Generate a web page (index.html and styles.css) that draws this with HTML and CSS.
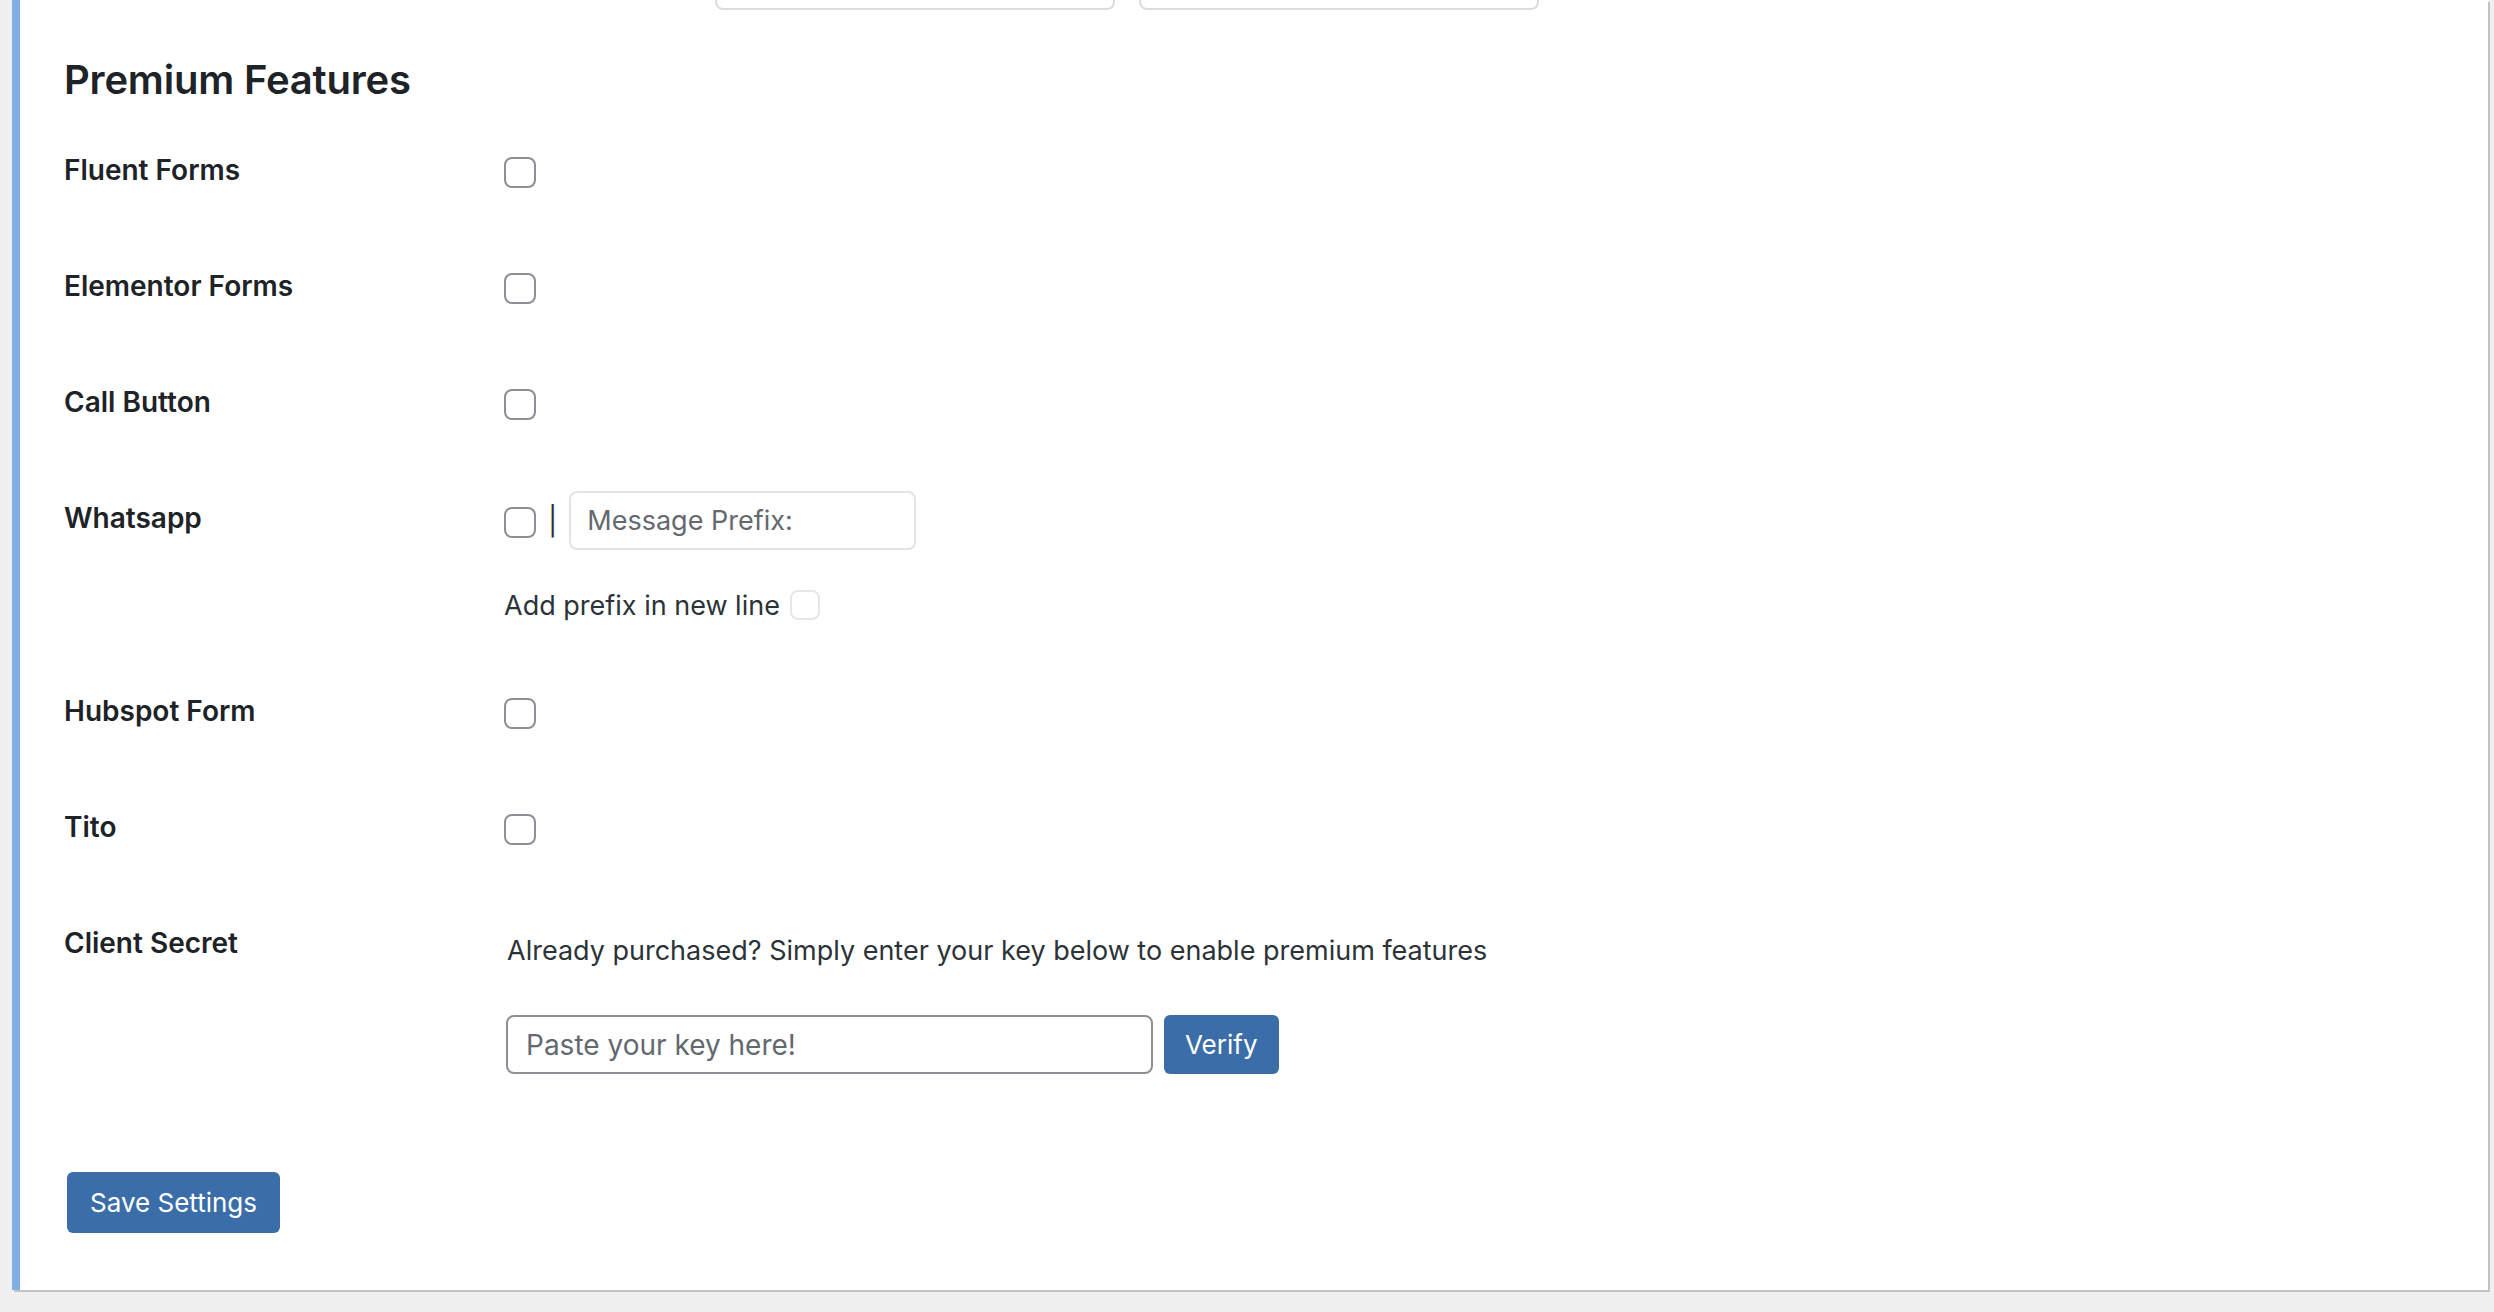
FILE: index.html
```html
<!DOCTYPE html>
<html lang="en">

<head>
    <meta charset="UTF-8">
    <meta name="viewport" content="width=device-width, initial-scale=1.0">
    <title>Settings - Premium Features</title>
    <link rel="stylesheet" href="styles.css">
</head>

<body>
    <div class="wrap">
        <div class="settings-panel">
            <!-- tail end of the previous section's fields -->
            <div class="prev-fields">
                <div class="prev-input"></div>
                <div class="prev-input"></div>
            </div>

            <h2 class="section-title">Premium Features</h2>

            <form class="form-table" onsubmit="return false;">
                <div class="form-row">
                    <div class="form-label">Fluent Forms</div>
                    <div class="form-field">
                        <div class="field-line"><input type="checkbox" class="check" name="fluent_forms"></div>
                    </div>
                </div>

                <div class="form-row">
                    <div class="form-label">Elementor Forms</div>
                    <div class="form-field">
                        <div class="field-line"><input type="checkbox" class="check" name="elementor_forms"></div>
                    </div>
                </div>

                <div class="form-row">
                    <div class="form-label">Call Button</div>
                    <div class="form-field">
                        <div class="field-line"><input type="checkbox" class="check" name="call_button"></div>
                    </div>
                </div>

                <div class="form-row">
                    <div class="form-label">Whatsapp</div>
                    <div class="form-field">
                        <div class="field-line whatsapp-line">
                            <input type="checkbox" class="check" name="whatsapp">
                            <span class="divider">|</span>
                            <input type="text" class="prefix-input" placeholder="Message Prefix:">
                        </div>
                        <div class="newline-option">
                            <span>Add prefix in new line</span>
                            <input type="checkbox" class="check check-light" name="prefix_newline">
                        </div>
                    </div>
                </div>

                <div class="form-row">
                    <div class="form-label">Hubspot Form</div>
                    <div class="form-field">
                        <div class="field-line"><input type="checkbox" class="check" name="hubspot_form"></div>
                    </div>
                </div>

                <div class="form-row">
                    <div class="form-label">Tito</div>
                    <div class="form-field">
                        <div class="field-line"><input type="checkbox" class="check" name="tito"></div>
                    </div>
                </div>

                <div class="form-row">
                    <div class="form-label">Client Secret</div>
                    <div class="form-field">
                        <p class="license-note">Already purchased? Simply enter your key below to enable premium features</p>
                        <div class="license-line">
                            <input type="text" class="key-input" placeholder="Paste your key here!">
                            <button type="button" class="button-primary">Verify</button>
                        </div>
                    </div>
                </div>

                <div class="submit-row">
                    <button type="submit" class="button-primary button-save">Save Settings</button>
                </div>
            </form>
        </div>
    </div>
</body>

</html>
```

FILE: styles.css
```css
body {
    font-family: Inter, "Noto Sans", Arial, sans-serif;
    margin: 0;
    padding: 0;
    background-color: #f0f0f1;
    color: #3c434a;
}

.wrap {
    padding: 0 6px 20px 12px;
}

.settings-panel {
    background-color: #fff;
    border-left: 8px solid #7fafe5;
    box-shadow: 2px 2px 0 #c3c4c7;
    padding: 0 40px 0 44px;
}

.prev-fields {
    display: flex;
    gap: 24px;
    padding-left: 651px;
    height: 10px;
}

.prev-input {
    width: 396px;
    height: 8px;
    border: 2px solid #dcdcde;
    border-top: none;
    border-radius: 0 0 8px 8px;
}

.section-title {
    font-size: 40px;
    font-weight: 600;
    line-height: 44px;
    letter-spacing: -0.2px;
    color: #1d2327;
    margin: 48px 0 10px 0;
}

.form-row {
    display: flex;
    align-items: flex-start;
}

.form-label {
    width: 400px;
    flex-shrink: 0;
    padding: 40px 20px 40px 0;
    font-size: 28px;
    font-weight: 600;
    line-height: 36px;
    color: #1d2327;
}

.form-field {
    padding: 30px 20px;
    font-size: 26px;
}

.field-line {
    display: flex;
    align-items: center;
    height: 56px;
}

.check {
    appearance: none;
    -webkit-appearance: none;
    width: 32px;
    height: 31px;
    margin: 4px 0 0 0;
    border: 2.5px solid #8c8f94;
    border-radius: 8px;
    background-color: #fff;
}

.check-light {
    width: 30px;
    height: 30px;
    margin: 0 0 0 10px;
    border-width: 2px;
    border-color: #e6e6e8;
}

.whatsapp-line {
    height: 60px;
    gap: 12px;
}

.whatsapp-line .check {
    margin-top: 4px;
}

.divider {
    font-size: 28px;
    color: #2c3338;
    margin-top: 2px;
}

.prefix-input {
    width: 347px;
    height: 59px;
    box-sizing: border-box;
    padding: 0 16px;
    border: 2px solid #e4e4e6;
    border-radius: 8px;
    font-family: inherit;
    font-size: 27px;
    color: #2c3338;
    outline: none;
}

.prefix-input::placeholder,
.key-input::placeholder {
    color: #646970;
}

.newline-option {
    display: flex;
    align-items: center;
    margin-top: 37px;
    height: 36px;
    font-size: 27px;
    color: #2c3338;
}

.license-note {
    margin: 16px 0 0 3px;
    line-height: 40px;
    font-size: 27px;
    color: #2c3338;
}

.license-line {
    display: flex;
    gap: 11px;
    margin-top: 44px;
    padding-left: 2px;
}

.key-input {
    width: 647px;
    height: 59px;
    box-sizing: border-box;
    padding: 0 18px;
    border: 2px solid #8c8f94;
    border-radius: 8px;
    font-family: inherit;
    font-size: 28px;
    color: #2c3338;
    outline: none;
}

.button-primary {
    height: 59px;
    padding: 0 21px;
    background-color: #3b6ea8;
    color: #fff;
    border: none;
    border-radius: 6px;
    font-family: inherit;
    font-size: 26px;
    cursor: pointer;
}

.button-primary:hover {
    background-color: #2f5d92;
}

.submit-row {
    padding: 68px 0 57px 3px;
}

.button-save {
    height: 61px;
    padding: 0 23px;
}
```
